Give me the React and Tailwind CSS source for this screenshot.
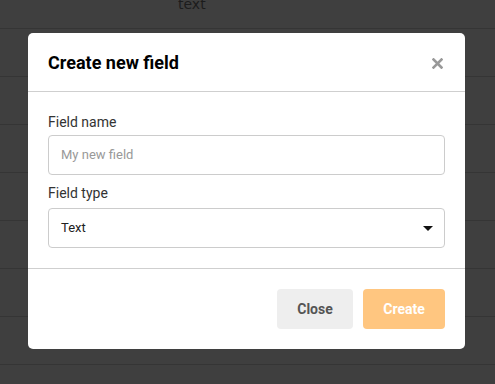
import React from "react";

const rows = [0, 1, 2, 3, 4, 5, 6, 7];

export default function App() {
  return (
    <div className="relative w-[495px] h-[384px] overflow-hidden bg-[#3f3f3f] font-['Roboto',sans-serif]">
      {/* table behind the overlay */}
      <div className="flex flex-col -mt-[19px]">
        {rows.map((r) => (
          <div key={r} className="h-12 border-b border-[#353535] flex items-center">
            {r === 0 && (
              <span className="ml-[178px] text-[14px] text-[#1c1c1c] font-['DejaVu_Sans',sans-serif]">text</span>
            )}
          </div>
        ))}
      </div>

      {/* modal */}
      <div className="absolute inset-0">
        <div className="mt-[33px] ml-[28px] w-[437px] bg-white rounded-[5px] flex flex-col">
          <div className="h-[59px] px-5 flex items-center justify-between border-b border-[#cfcfcf]">
            <h2 className="text-[18px] font-bold text-black">Create new field</h2>
            <button className="text-[#999] mr-0.5 mt-0.5" aria-label="Close">
              <svg width="11" height="11" viewBox="0 0 11 11">
                <path d="M1.5 1.5 L9.5 9.5 M9.5 1.5 L1.5 9.5" stroke="currentColor" strokeWidth="2.6" strokeLinecap="square" />
              </svg>
            </button>
          </div>

          <div className="px-5 pt-5 pb-5 border-b border-[#cfcfcf] flex flex-col">
            <label className="text-[14px] leading-5 text-[#333] mb-[3px]">Field name</label>
            <div className="h-10 border border-[#cccccc] rounded-[4px] px-3 flex items-center text-[13px] text-[#999]">
              My new field
            </div>
            <label className="text-[14px] leading-5 text-[#333] mt-2 mb-[5px]">Field type</label>
            <div className="h-10 border border-[#cccccc] rounded-[4px] px-3 flex items-center justify-between text-[13px] text-[#222]">
              <span>Text</span>
              <svg width="10" height="5" viewBox="0 0 10 5" className="mr-[-1px]">
                <path d="M0 0 L10 0 L5 5 Z" fill="#111" />
              </svg>
            </div>
          </div>

          <div className="p-5 flex justify-end gap-[10px]">
            <button className="w-[76px] h-10 rounded-[4px] bg-[#eeeeee] text-[#555] text-[14px] font-bold">Close</button>
            <button className="w-[82px] h-10 rounded-[4px] bg-[#ffc680] text-white text-[14px] font-bold">Create</button>
          </div>
        </div>
      </div>
    </div>
  );
}
